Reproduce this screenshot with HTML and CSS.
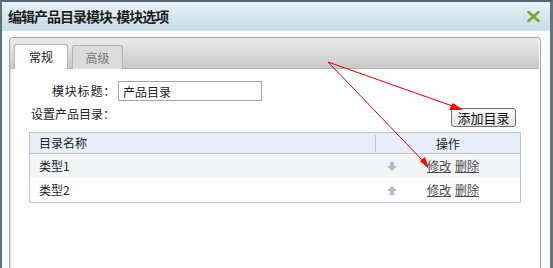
FILE: index.html
```html
<!DOCTYPE html>
<html lang="zh-CN">
<head>
<meta charset="utf-8">
<title>编辑产品目录模块-模块选项</title>
<link rel="stylesheet" href="styles.css">
</head>
<body>
<div class="dialog">
  <div class="titlebar">
    <span class="title">编辑产品目录模块-模块选项</span>
    <svg class="close" width="13" height="11" viewBox="0 0 13 11"><path d="M1.5 1 L11.5 10 M11.5 1 L1.5 10" stroke="#7ba82a" stroke-width="2.6" stroke-linecap="round"/></svg>
  </div>
  <div class="body">
    <div class="panel">
      <div class="tabstrip">
        <div class="tab active">常规</div>
        <div class="tab">高级</div>
      </div>
      <div class="content">
        <div class="row-title">
          <span class="label">模块标题：</span>
          <input class="input" type="text" value="产品目录">
        </div>
        <div class="row-set">
          <span class="label2">设置产品目录：</span>
          <button class="btn">添加目录</button>
        </div>
        <div class="table">
          <div class="thead">
            <div class="c1">目录名称</div>
            <div class="c2 head-op">操作</div>
          </div>
          <div class="tr odd">
            <div class="c1">类型1</div>
            <div class="c2 ops">
              <svg class="arr" width="10" height="9" viewBox="0 0 10 9"><path d="M3 0 H7 V4 H10 L5 9 L0 4 H3 Z" fill="#aabbd0"/></svg>
              <a class="lnk" href="#">修改</a><a class="lnk" href="#">删除</a>
            </div>
          </div>
          <div class="tr">
            <div class="c1">类型2</div>
            <div class="c2 ops">
              <svg class="arr" width="10" height="9" viewBox="0 0 10 9"><path d="M3 9 H7 V5 H10 L5 0 L0 5 H3 Z" fill="#aabbd0"/></svg>
              <a class="lnk" href="#">修改</a><a class="lnk" href="#">删除</a>
            </div>
          </div>
        </div>
      </div>
    </div>
  </div>
  <svg class="annot" width="553" height="268" viewBox="0 0 553 268">
    <line x1="328" y1="62" x2="458" y2="108" stroke="#d80000" stroke-width="1"/>
    <polygon points="463,110 449,110 453,103" fill="#ff0000"/>
    <line x1="328" y1="62" x2="426" y2="164" stroke="#d80000" stroke-width="1"/>
    <polygon points="429,169 420,161 425,157" fill="#ff0000"/>
  </svg>
</div>
</body>
</html>
```
FILE: styles.css
```css
html, body {
  margin: 0;
  padding: 0;
  background: #ffffff;
}
body {
  width: 553px;
  height: 268px;
  overflow: hidden;
  font-family: "Noto Sans CJK SC", "Noto Sans", sans-serif;
  font-size: 12px;
  color: #222;
}
.dialog {
  position: relative;
  width: 553px;
  height: 268px;
  box-sizing: border-box;
  border-top: 2px solid #56666e;
  border-left: 2px solid #5f727c;
  border-right: 3px solid #66757c;
  background: #fbfdfe;
}
.titlebar {
  height: 28px;
  display: flex;
  align-items: center;
  justify-content: space-between;
  padding: 0 10px 0 6px;
  background: linear-gradient(#e9f3f7, #c6dde7);
  border-bottom: 1px solid #d8e6ec;
}
.title {
  font-size: 14px;
  font-weight: bold;
  color: #1e1e1e;
  line-height: 16px;
  letter-spacing: -1px;
}
.close { display: block; margin-top: 1px; }
.body {
  padding: 6px 9px 0 7px;
}
.panel {
  border: 1px solid #9ea4a8;
  border-bottom: none;
  border-radius: 4px 4px 0 0;
  height: 240px;
  background: #fff;
  box-shadow: inset 1px 0 0 #e2e2e2;
}
.tabstrip {
  height: 24px;
  padding: 6px 0 0 4px;
  display: flex;
  gap: 4px;
  align-items: flex-end;
  background: linear-gradient(#ececec, #c9c9c9);
  border-radius: 3px 3px 0 0;
  margin: 0 1px 0 0;
  border-bottom: 1px solid #b8b8b8;
}
.tab {
  height: 24px;
  line-height: 24px;
  box-sizing: border-box;
  text-align: center;
  border: 1px solid #b4b4b4;
  border-bottom: none;
  border-radius: 3px 3px 0 0;
  font-size: 12px;
  color: #777;
  background: #dcdcdc;
  width: 51px;
  margin-bottom: -1px;
}
.tab.active {
  width: 54px;
  height: 25px;
  background: #fff;
  color: #222;
}
.content {
  padding: 12px 18px 0 19px;
}
.row-title {
  display: flex;
  align-items: center;
  padding-left: 23px;
  height: 20px;
}
.label { line-height: 14px; letter-spacing: 0.8px; }
.input {
  margin: 0 0 0 2px;
  width: 144px;
  height: 20px;
  box-sizing: border-box;
  border: 1px solid #a2aab0;
  padding: 0 4px;
  font-family: "Noto Sans CJK SC", sans-serif;
  font-size: 12px;
  color: #222;
  outline: none;
}
.row-set {
  display: flex;
  justify-content: space-between;
  align-items: flex-start;
  margin-top: 6px;
  padding-left: 2px;
  padding-right: 6px;
}
.label2 { line-height: 14px; }
.btn {
  margin-top: 1px;
  height: 19px;
  width: 65px;
  box-sizing: border-box;
  padding: 0;
  font-family: "Noto Sans CJK SC", sans-serif;
  font-size: 13px;
  line-height: 16px;
  color: #111;
  border: 1px solid #707070;
  border-radius: 3px;
  background: linear-gradient(#fdfdfd, #e4e4e4);
}
.table {
  margin-top: 5px;
  width: 492px;
  box-sizing: border-box;
  border: 1px solid #b8c6d6;
}
.thead, .tr {
  display: grid;
  grid-template-columns: 345px 1fr;
}
.thead {
  height: 20px;
  background: #e8eef8;
  border-bottom: 1px solid #b8c6d6;
  align-items: center;
}
.c1 { padding-left: 9px; line-height: 14px; }
.head-op {
  text-align: center;
  border-left: 1px solid #b8c6d6;
  height: 17px;
  line-height: 17px;
}
.tr { height: 24px; align-items: center; }
.tr.odd { background: #f4f5f6; }
.ops {
  display: flex;
  align-items: center;
  padding-left: 12px;
}
.arr { display: block; }
.lnk {
  color: #4a4a4a;
  text-decoration: underline;
  line-height: 14px;
}
.arr + .lnk { margin-left: 30px; }
.lnk + .lnk { margin-left: 4px; }
.annot {
  position: absolute;
  left: -2px;
  top: -2px;
  pointer-events: none;
}
```
